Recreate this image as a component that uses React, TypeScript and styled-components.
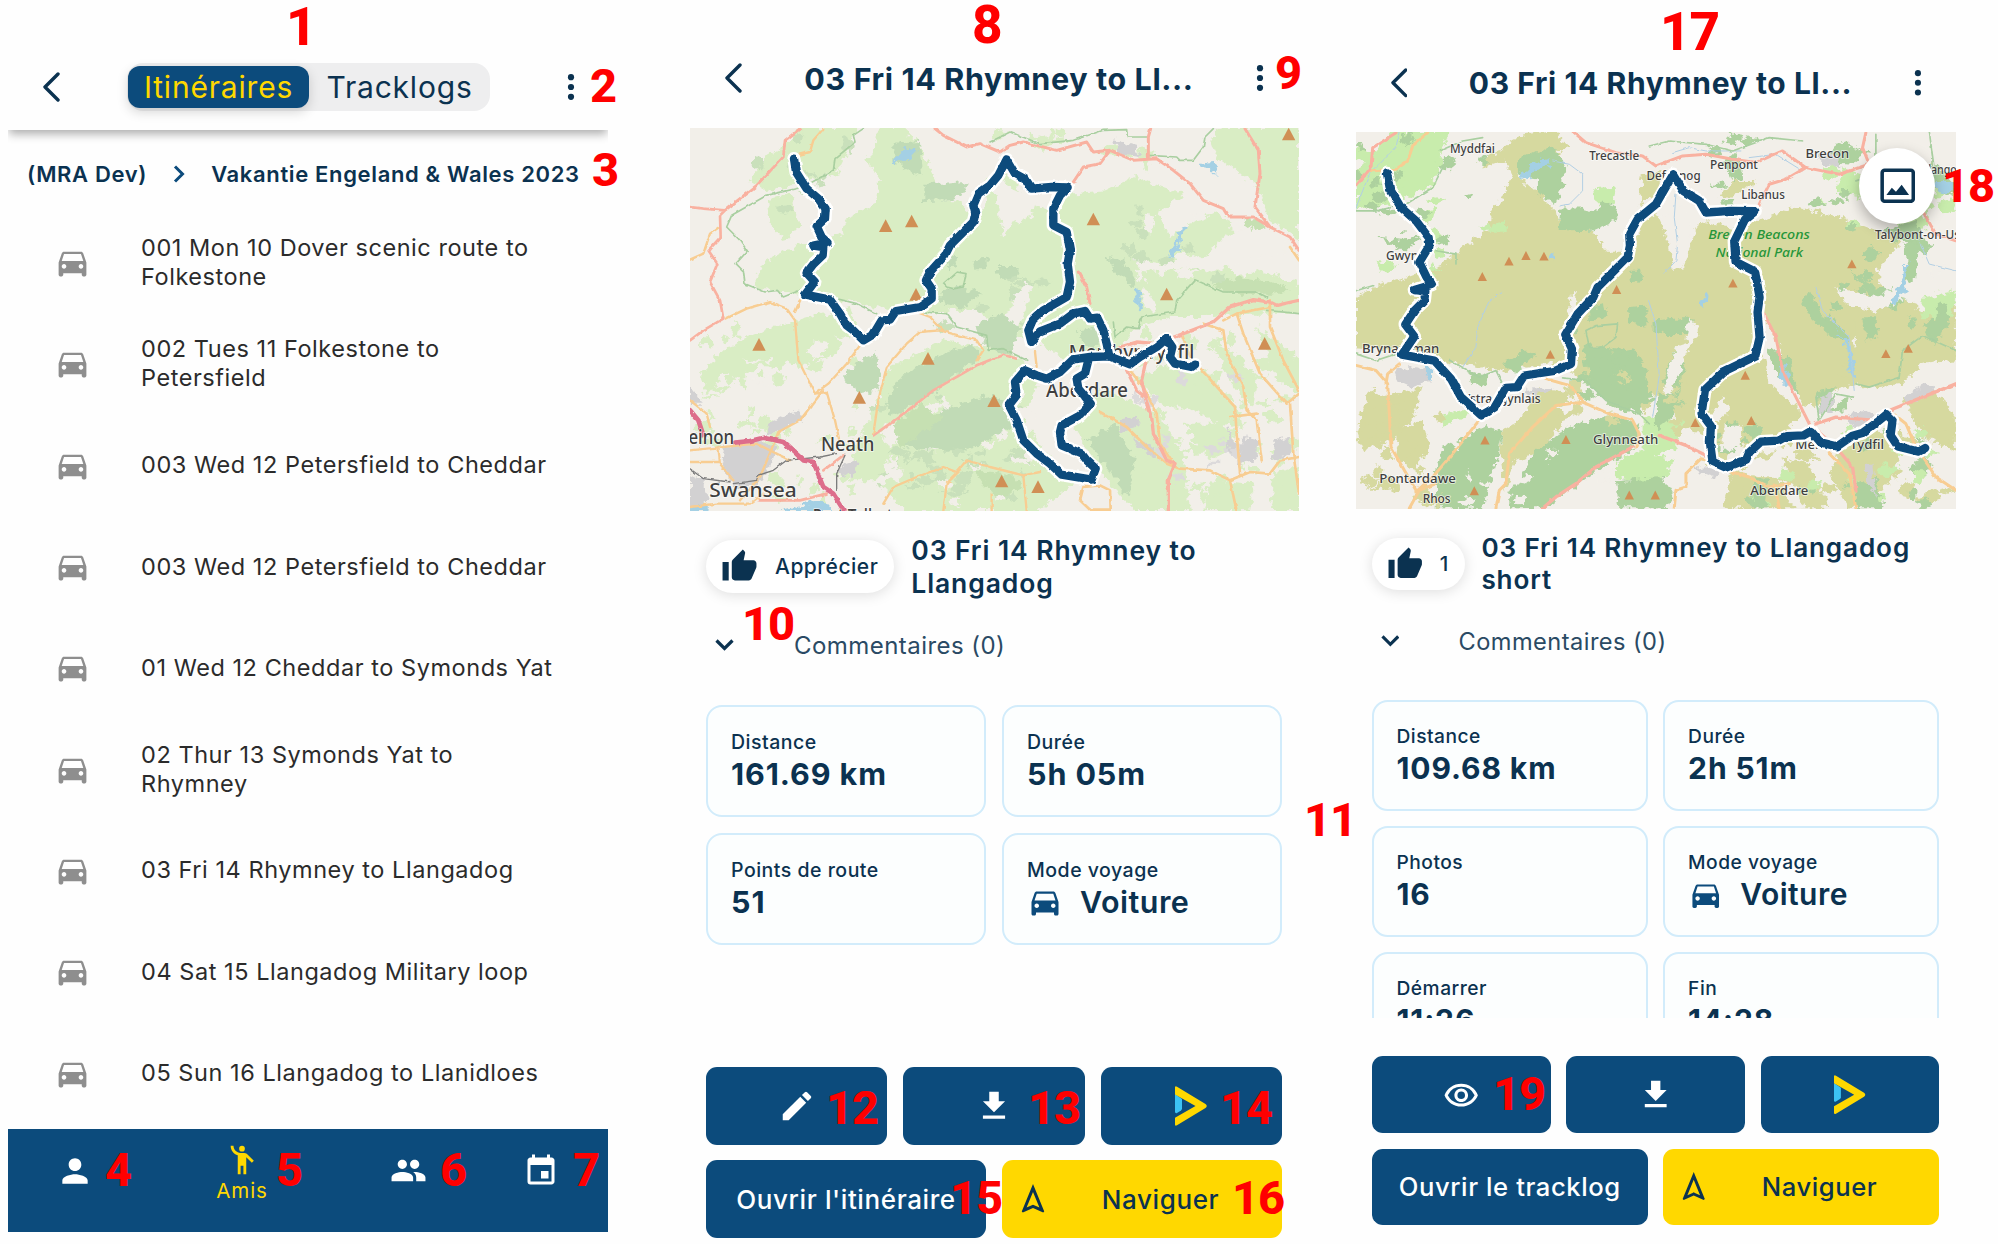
import React from 'react';
import styled, {createGlobalStyle} from 'styled-components';
import {
  MdDirectionsCar,
  MdEmojiPeople,
  MdEvent,
  MdFileDownload,
  MdModeEdit,
  MdOutlineNavigation,
  MdOutlineRemoveRedEye,
  MdPeople,
  MdPerson,
  MdThumbUp,
} from 'react-icons/md';

const NAVY = '#0c4b7c';
const INK = '#0b3250';
const YELLOW = '#ffd800';

const ROUTES = [
  '001 Mon 10 Dover scenic route to Folkestone',
  '002 Tues 11 Folkestone to Petersfield',
  '003 Wed 12 Petersfield to Cheddar',
  '003 Wed 12 Petersfield to Cheddar',
  '01 Wed 12 Cheddar to Symonds Yat',
  '02 Thur 13 Symonds Yat to Rhymney',
  '03 Fri 14 Rhymney to Llangadog',
  '04 Sat 15 Llangadog Military loop',
  '05 Sun 16 Llangadog to Llanidloes',
];

type Stat = {label: string; value: string; car?: boolean};

const ROUTE_STATS: Stat[] = [
  {label: 'Distance', value: '161.69 km'},
  {label: 'Durée', value: '5h 05m'},
  {label: 'Points de route', value: '51'},
  {label: 'Mode voyage', value: 'Voiture', car: true},
];

const TRACK_STATS: Stat[] = [
  {label: 'Distance', value: '109.68 km'},
  {label: 'Durée', value: '2h 51m'},
  {label: 'Photos', value: '16'},
  {label: 'Mode voyage', value: 'Voiture', car: true},
  {label: 'Démarrer', value: '11:26'},
  {label: 'Fin', value: '14:28'},
];

// callouts: text, left, baseline, big
const CALLOUTS: [string, number, number, boolean?][] = [
  ['1', 286, 46, true],
  ['2', 590, 102],
  ['3', 592, 186],
  ['4', 105, 1186],
  ['5', 276, 1186],
  ['6', 440, 1186],
  ['7', 573, 1186],
  ['8', 972, 44, true],
  ['9', 1275, 89],
  ['10', 742, 640],
  ['11', 1304, 836],
  ['12', 826, 1124],
  ['13', 1028, 1124],
  ['14', 1220, 1124],
  ['15', 950, 1214],
  ['16', 1232, 1214],
  ['17', 1660, 51, true],
  ['18', 1942, 202],
  ['19', 1493, 1110],
];

/* ---------- icons ---------- */

const BackIcon = () => (
  <svg width="18" height="30" viewBox="0 0 18 30" fill="none">
    <path d="M16 2 3 15l13 13" stroke={INK} strokeWidth="3.4" strokeLinecap="round" strokeLinejoin="round" />
  </svg>
);

const CrumbIcon = () => (
  <svg width="12" height="18" viewBox="0 0 12 18" fill="none">
    <path d="m2 1.5 7.5 7.5L2 16.5" stroke={NAVY} strokeWidth="3" />
  </svg>
);

const ExpandIcon = () => (
  <svg width="19" height="12" viewBox="0 0 19 12" fill="none">
    <path d="m1.5 1.5 8 8 8-8" stroke={INK} strokeWidth="3.2" />
  </svg>
);

const MoreIcon = () => (
  <svg width="8" height="28" viewBox="0 0 8 28" fill={INK}>
    <circle cx="4" cy="4.2" r="3.1" />
    <circle cx="4" cy="14" r="3.1" />
    <circle cx="4" cy="23.8" r="3.1" />
  </svg>
);

const PlayLogo = () => (
  <svg width="32" height="40" viewBox="0 0 32 40">
    <path d="M0 8 7 13v9.500q0 1.200-1 1.900L2 27q-2 .8-2-1.400Z" fill="#3cc3f5" />
    <path d="M0 1.200Q.3-.4 2 .7L30.500 18q2.500 2 0 4L2 39.300q-1.700 1-2-.6v-7L20.500 20 0 8.500Z" fill={YELLOW} />
  </svg>
);

const PhotoIcon = () => (
  <svg width="36" height="36" viewBox="0 0 36 36" fill="none">
    <rect x="2.200" y="2.200" width="31.600" height="31.600" rx="2.500" stroke={INK} strokeWidth="3.600" />
    <path d="m6.500 27.500 5.500-7.500 4.200 4 5.800-7 7.500 10.500Z" fill={INK} />
  </svg>
);

/* ---------- maps ---------- */

const ROAD = {a: '#f9b1a0', b: '#f8cd92', border: '#a9cfa0', m: '#dd6d8b', rail: '#7b7b7b', river: '#b2cfe4'};

type Road = [keyof typeof ROAD, number, string];
type Place = [string, number, number, number];

type MapData = {
  viewBox: string;
  patches: [string, string][];
  scatter: [string, number, number, number, number, number][];
  roads: Road[];
  peaks: [number, number][];
  peakSize: number;
  places: Place[];
  placeSize: number;
  park?: Place[];
  track: string;
};

// Deterministic little woods and fields, [colour, x, y, w, h, count]
const scatterPath = (x: number, y: number, w: number, h: number, count: number) => {
  let seed = x * 7 + y * 13 + w + 11;
  const next = () => {
    seed = (seed * 16807 + 12345) % 2147483647;
    return seed / 2147483647;
  };
  let d = '';
  for (let i = 0; i < count; i++) {
    const cx = x + next() * w;
    const cy = y + next() * h;
    const rx = 8 + next() * 26;
    const ry = 6 + next() * 20;
    const k = next() * 24 - 12;
    d += `M${cx - rx} ${cy + k}L${cx - k} ${cy - ry}L${cx + rx} ${cy - k}L${cx + k} ${cy + ry}Z`;
  }
  return d;
};

const ROUTE_MAP: MapData = {
  viewBox: '0 3 1827 1149',
  patches: [
    ['#d9edc4', 'M190 475 220 410 330 350 440 330 480 270 560 230 570 160 530 100 560 40 560 0 640 0 690 50 720 130 740 170 700 220 800 220 850 260 890 230 880 160 940 130 1010 210 1060 250 1140 200 1250 190 1330 150 1480 200 1400 260 1440 330 1560 250 1640 290 1600 400 1640 450 1720 430 1827 470 1827 560 1640 560 1540 570 1440 570 1340 600 1290 660 1150 720 1040 640 960 620 850 540 740 560 620 560 480 520 400 520 330 500 250 490Z'],
    ['#d9edc4', 'M180 160 230 90 280 60 330 0 500 0 480 60 440 140 330 170 230 190Z M1560 30 1600 0 1827 0 1827 340 1740 280 1700 180 1640 130 1580 90Z'],
    ['#d9edc4', 'M30 740 120 650 250 600 360 570 480 540 500 600 440 680 330 720 240 690 160 750 100 740 50 800Z M230 220 300 200 330 290 290 340 240 300Z'],
    ['#d9edc4', 'M560 820 600 720 760 640 900 660 1000 700 1050 760 1000 880 1080 1000 1150 1070 1050 1152 640 1152 560 1060 480 1060 500 950Z'],
    ['#d9edc4', 'M1330 760 1480 690 1560 740 1650 860 1600 900 1500 850 1420 830Z M1560 640 1640 680 1700 760 1690 840 1620 760Z M1700 600 1760 640 1827 700 1827 800 1760 760Z M1480 890 1600 890 1640 960 1560 1000Z M1220 780 1400 860 1480 980 1500 1152 1340 1152 1240 1050 1150 900Z M1560 1060 1690 1070 1680 1152 1540 1152Z M1750 1040 1827 1020 1827 1152 1740 1152Z'],
    ['#f2efe9', 'M900 150 1040 215 1020 270 960 290 940 330 925 250Z M1330 400 1440 410 1560 380 1600 330 1700 290 1790 310 1780 380 1680 390 1560 440 1500 420 1420 440 1350 430Z M940 580 1000 470 1025 480 985 620Z M1360 480 1400 540 1390 560 1350 500Z'],
    ['#c1dbb6', 'M460 740 560 670 570 790 520 800 460 760Z M590 820 640 740 760 680 850 650 870 690 780 760 700 820 600 870Z M610 50 690 45 700 150 650 130 610 100Z M700 170 770 170 820 165 830 190 780 220 700 222Z M750 500 800 470 870 500 820 540 760 530Z'],
    ['#c1dbb6', 'M1190 940 1280 890 1300 950 1340 1000 1310 1105 1250 1020Z M640 960 760 850 900 800 980 840 960 900 860 960 740 970Z M1250 390 1300 400 1340 460 1330 480 1280 440Z M1160 610 1240 600 1260 640 1190 660Z M850 600 930 560 990 600 960 690 880 650Z M850 400 890 395 890 430 860 430Z M770 390 800 390 800 420 775 425Z M920 420 990 420 985 445 925 455Z'],
    ['#c6e0b2', 'M1560 480 1640 450 1730 460 1800 490 1740 500 1640 500Z M600 900 690 830 760 870 640 960Z M850 1030 960 1040 1000 1080 920 1110Z M1650 280 1700 270 1730 300 1690 310Z'],
    ['#d2d1d2', 'M100 960 200 940 260 960 240 1020 200 1080 130 1080 90 1010Z M0 1040 40 1060 60 1120 0 1152Z M240 880 330 850 340 880 270 910 230 930Z M0 780 40 830 0 830Z M460 1010 500 1000 490 1050 450 1040Z M1270 40 1340 60 1350 90 1280 80Z M1290 880 1340 870 1350 895 1290 920Z M1660 930 1700 940 1700 1000 1640 1010Z M1750 940 1800 930 1810 980 1750 1000Z M1330 930 1400 960 1390 990 1340 960Z M1610 900 1640 960 1620 980Z'],
    ['#a4d0e4', 'M610 100 650 60 680 70 660 95 620 108Z M1530 110 1575 108 1583 145 1568 130 1532 126Z M1470 298 1484 300 1465 365 1445 390 1438 380 1460 350Z M1333 480 1345 478 1362 545 1348 550 1334 510Z M270 1152 340 1132 400 1118 430 1152Z M0 1140 40 1130 60 1152 0 1152Z'],
  ],
  scatter: [
    ['#c9e0bb', 560, 800, 460, 320, 44],
    ['#d9edc4', 20, 600, 480, 520, 44],
    ['#d9edc4', 1300, 620, 520, 520, 76],
    ['#f2efe9', 560, 780, 500, 360, 26],
    ['#f2efe9', 1350, 220, 300, 240, 12],
    ['#c9e0bb', 1280, 250, 440, 240, 10],
    ['#f2efe9', 60, 620, 420, 160, 12],
    ['#d9edc4', 900, 10, 500, 110, 14],
    ['#c9e0bb', 760, 450, 300, 190, 9],
    ['#dcdadb', 1300, 740, 500, 320, 14],
    ['#c9e0bb', 200, 20, 300, 250, 8],
  ],
  roads: [
    ['border', 5, 'M520 5 490 25 495 45 435 95 430 130 340 180 230 205 125 265 110 300 150 340 172 372 138 410 160 432 165 470 225 495 262 490 280 510 330 490 420 510 500 530 560 560 M700 555 770 560 800 600 890 625 895 670 940 665 1010 700 M760 470 800 435 828 440 820 480 790 485 770 480Z'],
    ['border', 5, 'M900 45 960 15 1050 50 1150 40 1240 10 1310 8 1312 30 1370 30 M1375 85 1460 90 1470 100 1510 100 1540 60 1545 30 1570 5 M1270 585 1275 630 1310 600 1345 605 1355 570 1455 555 1460 520 1515 458 1600 495 1700 495 1730 510 M1730 550 1827 560'],
    ['b', 7, 'M400 5 370 40 360 75 300 90 M88 300 60 320 40 380 0 398 M108 575 170 545 240 525 290 545 315 580 325 700 375 800 M335 510 315 555 M375 800 415 770 470 710 510 655 M375 800 410 795 435 880 450 950 M400 790 330 880 265 915 235 990 210 1050 150 1120 M0 820 50 860 60 900 M85 960 90 1010 130 1060 M0 970 200 950 300 1000 M0 1005 90 1005'],
    ['b', 7, 'M550 920 565 820 590 720 650 650 690 615 750 610 860 640 880 670 860 700 M680 555 720 570 760 610 M580 1130 610 1080 680 1050 760 1020 800 1035 830 1000 900 1020 1000 1045 1050 1035 M760 1152 770 1070 810 1030 M905 1152 905 1100 M1000 1045 1010 1152 M1035 675 1040 720 M0 1140 80 1130 180 1130 220 1100'],
    ['b', 8, 'M1230 855 1310 900 1370 960 1430 1010 1470 1025 1560 1030 1620 1060 1680 1035 1740 1040 1770 1000 1827 990 M1475 620 1500 690 1590 790 1635 840 1640 920 1650 1040 M1600 610 1610 680 1660 780 1670 850 1700 880 1715 1000 M1640 560 1660 620 1710 740 1790 830 1827 800 M1740 520 1740 600 1780 700 1827 790 M1320 730 1360 780 1400 860 1410 950 1450 1010 M1600 580 1640 560 1740 540 M1540 590 1600 610 M1620 1060 1640 1152 M1170 1120 1180 1080 1230 1075 1260 1090 1262 1148 1200 1148Z M1700 860 1620 870 M1800 830 1810 980 1827 1100 M1800 360 1827 400'],
    ['a', 8, 'M330 5 285 40 280 90 200 175 105 250 90 265 92 330 55 370 82 410 60 465 90 520 100 575 40 610 0 640 M0 240 40 245 105 250 M550 925 600 890 680 830 730 790 860 715 940 683 980 695 M400 1030 460 985 M210 1120 330 1120 410 1100'],
    ['a', 9, 'M735 5 760 25 830 60 870 50 930 75 960 55 1000 45 1100 70 1190 45 1210 75 1260 70 1330 100 1400 95 1450 130 1500 170 1540 220 1600 245 1615 270 1690 270 1740 300 1800 330 1827 370 M1375 90 1375 30 1382 5 M1260 70 1230 110 1180 120 1150 165 M1665 5 1705 70 1710 140 1695 240 1740 300 M1165 435 1190 480 1200 530'],
    ['a', 10, 'M1290 660 1340 645 1400 650 1480 620 1570 585 1620 540 1690 518 1740 525 1760 535 1827 520 M1310 730 1340 790 1365 810 1385 870 1390 920 1430 1000 1455 1010 1435 1060 1435 1152 M1370 690 1355 760 1375 850'],
    ['rail', 4, 'M0 1025 40 1055 120 1065 M130 1070 200 1060 205 1045 250 1030 290 1000 390 990 440 980 M465 985 440 1040 440 1090'],
    ['m', 14, 'M0 850 25 880 40 925 M135 947 180 942 220 932 280 945 340 1000 370 1005 400 1080 430 1100 460 1148'],
  ],
  peaks: [[587, 297], [665, 283], [678, 503], [207, 653], [714, 695], [508, 812], [912, 822], [935, 1063], [1210, 277], [1430, 502], [1724, 650], [1044, 1080], [1796, 22]],
  peakSize: 20,
  places: [
    ['Neath', 393, 972, 160],
    ['Swansea', 58, 1109, 262],
    ['Gorseinon', -118, 950, 250],
    ['Aberdare', 1068, 809, 246],
    ['Merthyr Tydfil', 1136, 695, 377],
    ['Port Talbot', 368, 1188, 240],
  ],
  placeSize: 57,
  track:
    'M312 95 318 135 350 185 385 215 407 245 405 275 380 298 395 330 413 347 370 356 400 360 398 385 370 412 350 438 374 464 345 503 420 518 450 560 470 595 490 610 520 640 550 622 575 580 600 578 618 552 690 540 725 515 725 485 708 460 720 435 765 385 780 355 850 285 856 260 850 235 865 200 900 175 925 145 950 97 975 140 1008 158 1025 185 1085 180 1133 181 1110 205 1090 245 1090 295 1130 315 1140 370 1133 410 1140 465 1130 510 1060 550 1028 580 1015 610 1024 645 1050 613 1110 590 1150 560 1185 552 1200 575 1222 572 1240 610 1250 650 1258 688 1200 690 1150 697 1110 735 1070 755 1040 745 1005 730 975 765 980 805 957 835 980 880 1000 940 1040 980 1080 1010 1115 1043 1205 1058 1217 1025 1190 1000 1175 980 1115 955 1110 915 1115 895 1170 865 1202 830 1165 785 1160 755 1185 740 1195 700 M1258 688 1320 712 1350 690 1400 660 1430 635 1447 660 1440 690 1455 710 1505 720 1515 713',
};

const TRACK_MAP: MapData = {
  viewBox: '0 3 1800 1134',
  patches: [
    ['#d6d99f', 'M0 500 60 470 150 440 260 400 330 340 400 300 410 240 450 180 470 130 440 90 380 110 370 90 430 60 500 10 600 0 640 50 600 70 500 90 480 130 560 200 600 240 610 300 710 300 750 360 830 360 860 280 900 240 935 320 950 415 980 410 1010 330 1030 270 1140 290 1210 270 1310 230 1460 260 1560 300 1640 330 1560 420 1600 500 1530 560 1490 640 1540 720 1500 760 1400 790 1380 830 1340 820 1300 720 1230 560 1210 620 1240 760 1340 850 1290 900 1180 950 1100 940 1060 860 970 910 940 800 700 760 600 700 440 720 300 700 130 660 0 650Z'],
    ['#d6d99f', 'M1500 560 1640 500 1700 540 1800 520 1800 690 1700 700 1640 760 1540 770 1440 740 1500 640Z M40 780 100 800 200 770 170 860 120 920 20 960 0 900Z M130 900 200 870 220 950 170 1020 120 980Z M550 770 640 790 620 830 500 860Z M440 900 560 820 640 850 560 960 470 1000 450 1080 430 960Z M860 130 920 120 900 200 850 220Z M1090 200 1130 150 1200 150 1130 200Z M1450 950 1560 900 1640 940 1600 1060 1480 1134 1420 1030Z M1130 1030 1260 1040 1320 1134 1100 1134Z M1640 800 1740 780 1800 860 1800 960 1700 920Z M1280 980 1360 1000 1420 1134 1340 1134Z'],
    ['#c8ecac', 'M0 120 60 60 110 0 280 0 260 60 250 120 200 180 100 220 0 240Z M715 175 780 170 770 220 720 220Z M190 240 240 230 230 270 200 280Z M370 290 450 270 450 300 390 300Z M780 990 860 960 950 990 930 1040 840 1050 780 1040Z M250 860 330 830 350 850 260 890Z M60 390 130 400 80 430Z M860 860 980 870 960 960 860 980Z M1460 110 1560 150 1520 200 1440 180Z M1600 240 1700 180 1740 230 1640 290Z M1700 500 1800 480 1790 560 1700 560Z'],
    ['#add19e', 'M480 90 540 60 590 50 630 100 620 160 600 220 540 190 540 140 480 130Z M610 230 680 230 720 240 740 215 790 230 780 270 710 300 605 302Z M820 420 860 420 855 450 825 455Z M810 530 870 525 875 585 820 580Z M700 530 750 520 755 560 700 575Z M680 640 780 660 830 650 860 700 890 800 850 850 760 830 700 760Z'],
    ['#add19e', 'M260 950 390 890 440 900 420 1000 380 1134 240 1134 240 1020Z M460 1090 540 960 640 890 760 850 850 880 840 950 740 1010 640 1080 560 1134 460 1134Z M440 700 500 660 540 670 480 730Z M780 1050 920 1040 950 1090 930 1134 790 1134Z M890 570 1010 560 1010 610 930 610 890 600Z M900 800 960 650 990 700 950 860 900 900Z M340 720 400 740 380 770 350 760Z M60 320 140 330 200 310 150 360Z'],
    ['#add19e', 'M1360 480 1400 560 1470 600 1480 640 1420 610 1370 570 1340 510Z M1480 420 1560 470 1640 480 1660 400 1640 340 1690 330 1670 480 1620 540 1560 510Z M1580 300 1680 270 1700 330 1640 330Z M1520 560 1560 560 1570 620 1530 630Z M1250 650 1300 690 1330 790 1270 740 1230 660Z M1380 780 1430 770 1430 830 1480 800 1470 840 1390 840Z M1700 590 1760 540 1790 560 1740 640Z M1200 1040 1240 1050 1230 1134 1190 1134Z M1440 30 1540 60 1490 100 1420 90Z M1730 90 1800 160 1790 200 1720 160Z M1500 1060 1560 1040 1580 1134 1500 1134Z'],
    ['#f2efe9', 'M920 260 980 220 1010 330 970 410 950 410 940 340Z M920 780 960 650 990 640 1000 560 1030 600 980 700 940 800Z M1060 860 1100 800 1120 840 1070 890Z M1440 470 1560 500 1640 460 1780 400 1720 450 1640 510 1560 540 1470 520Z M650 480 665 500 660 560 630 570Z M1100 880 1160 890 1150 950 1100 960Z'],
    ['#d2d1d2', 'M110 720 180 710 225 725 220 755 160 768 120 750Z M510 775 590 770 570 790 520 795Z M1010 1010 1050 1005 1100 1020 1060 1046Z M1380 60 1450 80 1460 110 1390 95Z M1390 800 1430 790 1430 850 1390 850Z M1480 850 1540 840 1570 880 1490 890Z M1640 800 1720 760 1740 780 1660 820Z M1530 1000 1550 1000 1560 1100 1530 1050Z'],
    ['#a4d0e4', 'M490 140 530 95 580 80 585 105 540 115 510 150Z M1050 488 1055 495 1045 530 1030 530 1035 505Z M210 715 228 715 228 745 210 740Z M580 365 588 362 595 385 585 390Z M1645 400 1664 400 1640 500 1620 520 1605 510 1630 470Z M1440 590 1455 610 1490 660 1498 740 1480 730 1470 650Z M1270 710 1290 710 1300 760 1280 760Z M1740 150 1800 150 1800 190 1745 180Z'],
  ],
  scatter: [
    ['#d6d99f', 0, 760, 260, 370, 30],
    ['#d6d99f', 600, 740, 500, 160, 24],
    ['#d6d99f', 1040, 900, 740, 220, 34],
    ['#f2efe9', 240, 900, 560, 220, 10],
    ['#c8ecac', 0, 60, 250, 400, 14],
    ['#add19e', 0, 20, 400, 320, 14],
    ['#c8ecac', 1380, 100, 410, 220, 16],
    ['#add19e', 1380, 180, 410, 420, 18],
    ['#add19e', 1050, 860, 740, 270, 22],
    ['#c8ecac', 1200, 860, 590, 270, 16],
    ['#add19e', 650, 560, 350, 270, 12],
    ['#add19e', 1050, 20, 400, 240, 9],
  ],
  roads: [
    ['river', 3, 'M0 230 40 130 120 50 130 0 M590 90 640 100 680 130 680 180 640 220 610 225 M440 485 400 510 365 590 360 650 320 710 M960 190 955 260 965 340 960 390 925 428 M878 510 900 580 910 740 890 860 M1155 60 1050 60 1000 50 950 65 M1380 470 1400 540 1480 620 1495 780 M1690 330 1720 400 1800 420 M1180 80 1260 70 1340 120'],
    ['border', 5, 'M250 60 320 30 380 20 M0 240 60 240 150 220 230 170 260 110 M0 480 50 465 M240 360 300 370 300 400 M690 600 720 585 785 580 780 620 740 650 700 650Z M0 670 60 690 120 670 M280 690 370 740 420 720 440 760 M620 742 690 750 750 810 850 850 880 880 M880 45 940 30 1050 40 1130 60 1240 20 1340 30 M1500 760 1540 770 1630 740 1640 660 1700 615 1800 660 M1380 800 1390 870 1440 790 1490 800 M1560 10 1560 130 1500 150 M1720 0 1740 150'],
    ['b', 9, 'M215 5 170 45 155 90 120 115 40 120 M0 705 60 720 95 760 100 850 105 950 145 1020 180 1080 M130 700 95 730 90 760 M180 1085 230 1040 290 970 365 875 M160 1134 190 1080 240 1060 M420 1134 430 1080 450 1060 460 970 530 890 600 825 680 815 760 850 830 870 850 910 840 950 M570 745 640 765 690 820 M955 1134 960 1080 990 1070 990 1030 1035 985 1060 990 M1110 1020 1180 1040 1240 1070 1300 1060 M1600 840 1650 880 1680 950 1740 1040 1800 1080 M1420 970 1480 1030 1500 1134 M1270 1134 1260 1080'],
    ['a', 9, 'M120 5 50 50 45 110 0 165 M655 5 690 35 780 65 860 75 900 105 980 75 1050 70 1130 85 1200 95 1280 60 1350 110 1450 130 1540 100 1600 100 M1350 110 1290 145 1240 160 1210 220 M1530 5 1520 50 1540 100 M1700 240 1740 310 1800 330 M1225 550 1260 620 1280 720 1320 800 1360 880 1370 900'],
    ['a', 10, 'M560 1134 600 1100 660 1060 720 1010 830 950 M910 915 990 945 1060 980 M1380 880 1440 860 1560 870 1600 840 1700 800 1800 760 M1440 950 1490 1010 1500 1080 M1370 890 1440 950'],
  ],
  peaks: [[379, 438], [459, 392], [510, 375], [564, 377], [782, 477], [1131, 458], [583, 672], [1168, 735], [387, 930], [630, 928], [355, 1082], [820, 1095], [898, 1095], [1018, 877], [1186, 871], [1488, 400], [1590, 670], [1657, 654]],
  peakSize: 14,
  places: [
    ['Myddfai', 282, 65, 135],
    ['Trecastle', 700, 88, 150],
    ['Defynnog', 872, 147, 162],
    ['Penpont', 1062, 115, 144],
    ['Brecon', 1349, 80, 131],
    ['Libanus', 1156, 205, 131],
    ['Gwynfe', 90, 388, 130],
    ['Brynamman', 18, 666, 232],
    ['Ystradgynlais', 322, 817, 232],
    ['Glynneath', 711, 942, 196],
    ['Pontardawe', 70, 1057, 230],
    ['Rhos', 200, 1119, 84],
    ['Merthyr Tydfil', 1318, 957, 267],
    ['Aberdare', 1183, 1093, 174],
    ['Talybont-on-Usk', 1557, 325, 275],
    ['Llangorse', 1700, 130, 150],
  ],
  placeSize: 40,
  park: [
    ['Brecon Beacons', 1057, 325, 305],
    ['National Park', 1079, 379, 262],
  ],
  track:
    'M93 127 102 175 135 230 180 270 218 320 220 345 190 395 212 440 228 462 175 478 208 482 205 510 175 540 148 582 175 618 138 672 235 690 285 745 315 800 376 855 415 832 450 772 482 770 505 735 600 720 645 700 648 655 628 612 665 550 712 500 725 470 815 380 822 345 820 310 845 265 900 220 952 130 982 180 1030 210 1050 245 1125 240 1198 241 1167 266 1135 332 1139 393 1198 423 1211 500 1205 545 1211 621 1198 677 1104 723 1047 778 1037 849 1065 887 1062 936 1070 994 1110 1012 1171 988 1180 966 1215 934 1268 931 1293 917 1343 915 1365 902 1394 936 1444 948 1488 917 1519 908 1564 875 1592 852 1610 870 1604 915 1626 948 1689 964 1708 953',
};

const RouteMap: React.FC<{data: MapData; id: string}> = ({data, id}) => {
  const label = (cls: string, [text, x, y, w]: Place) => (
    <text key={text} className={cls} x={x} y={y} textLength={w} lengthAdjust="spacingAndGlyphs" fontSize={data.placeSize}>
      {text}
    </text>
  );

  return (
    <MapSvg viewBox={data.viewBox} preserveAspectRatio="none">
      <defs>
        <filter id={`rough-${id}`} x="-5%" y="-5%" width="110%" height="110%">
          <feTurbulence type="fractalNoise" baseFrequency="0.045" numOctaves="3" seed="4" />
          <feDisplacementMap in="SourceGraphic" scale="34" xChannelSelector="R" yChannelSelector="G" />
        </filter>
        <filter id={`wobble-${id}`} x="-5%" y="-5%" width="110%" height="110%">
          <feTurbulence type="fractalNoise" baseFrequency="0.05" numOctaves="2" seed="9" />
          <feDisplacementMap in="SourceGraphic" scale="9" xChannelSelector="R" yChannelSelector="G" />
        </filter>
      </defs>
      <rect x="0" y="0" width="1830" height="1160" fill="#f2efe9" />
      <g filter={`url(#rough-${id})`}>
        {data.patches.slice(0, 5).map(([fill, d]) => (
          <path key={d} d={d} fill={fill} />
        ))}
        {data.scatter.map(([fill, x, y, w, h, n]) => (
          <path key={`${x}-${y}-${fill}`} d={scatterPath(x, y, w, h, n)} fill={fill} />
        ))}
        {data.patches.slice(5).map(([fill, d]) => (
          <path key={d} d={d} fill={fill} />
        ))}
      </g>
      <g filter={`url(#wobble-${id})`} fill="none" strokeLinejoin="round" strokeLinecap="round">
        {data.roads.map(([kind, width, d]) => (
          <path key={d} d={d} stroke={ROAD[kind]} strokeWidth={width} />
        ))}
      </g>
      {data.peaks.map(([x, y]) => (
        <path
          key={`${x}-${y}`}
          d={`M${x} ${y - data.peakSize}l${data.peakSize} ${data.peakSize * 1.9}h${-data.peakSize * 2}Z`}
          fill="#d08f55"
        />
      ))}
      {data.places.map(place => label('place', place))}
      {data.park?.map(place => label('park', place))}
      <g filter={`url(#wobble-${id})`} fill="none" strokeLinejoin="round" strokeLinecap="round">
        <path d={data.track} stroke="#fff" strokeWidth="40" />
        <path d={data.track} stroke={NAVY} strokeWidth="25" />
      </g>
    </MapSvg>
  );
};

/* ---------- screens ---------- */

const ListScreen = () => (
  <Phone $width={600} $left={8} $height={1232}>
    <ListHeader>
      <BackIcon />
      <Segmented>
        <Segment $active>Itinéraires</Segment>
        <Segment>Tracklogs</Segment>
      </Segmented>
      <MoreIcon />
    </ListHeader>
    <Breadcrumb>
      <Crumb>(MRA Dev)</Crumb>
      <CrumbIcon />
      <Crumb>Vakantie Engeland &amp; Wales 2023</Crumb>
    </Breadcrumb>
    <RouteList>
      {ROUTES.map((name, i) => (
        <RouteRow key={i}>
          <MdDirectionsCar size={37} color="#8e8e8e" />
          <RouteName>{name}</RouteName>
        </RouteRow>
      ))}
    </RouteList>
    <TabBar>
      <Tab $width={134}>
        <MdPerson size={38} />
      </Tab>
      <Tab $width={200} $active>
        <MdEmojiPeople size={34} />
        <TabLabel>Amis</TabLabel>
      </Tab>
      <Tab $width={132}>
        <MdPeople size={37} />
      </Tab>
      <Tab $width={134}>
        <MdEvent size={36} />
      </Tab>
    </TabBar>
  </Phone>
);

type DetailProps = {
  likes: string;
  name: string;
  stats: Stat[];
  openLabel: string;
  firstAction: React.ReactNode;
  map: React.ReactNode;
  left: number;
  top?: number;
  scale?: number;
  photos?: boolean;
};

const DetailScreen: React.FC<DetailProps> = props => (
  <Phone $width={609} $left={props.left} $top={props.top} $scale={props.scale} $height={1238}>
    <DetailHeader>
      <BackIcon />
      <ScreenTitle>03 Fri 14 Rhymney to Ll...</ScreenTitle>
      <MoreIcon />
    </DetailHeader>
    <MapBox>
      {props.map}
      {props.photos && (
        <PhotoButton>
          <PhotoIcon />
        </PhotoButton>
      )}
    </MapBox>
    <Details>
      <Summary>
        <LikeButton>
          <MdThumbUp size={37} />
          {props.likes}
        </LikeButton>
        <RouteTitle>{props.name}</RouteTitle>
      </Summary>
      <Comments>
        <ExpandIcon />
        <CommentsLabel>Commentaires (0)</CommentsLabel>
      </Comments>
      <StatGrid>
        {props.stats.map(({label, value, car}) => (
          <StatCard key={label}>
            <StatLabel>{label}</StatLabel>
            <StatValue $medium={car}>
              {car && <MdDirectionsCar size={36} color={NAVY} />}
              {value}
            </StatValue>
          </StatCard>
        ))}
      </StatGrid>
    </Details>
    <Actions>
      <ActionRow>
        <ActionButton>{props.firstAction}</ActionButton>
        <ActionButton>
          <MdFileDownload size={38} />
        </ActionButton>
        <ActionButton>
          <PlayLogo />
        </ActionButton>
      </ActionRow>
      <ActionRow>
        <ActionButton>{props.openLabel}</ActionButton>
        <NavigateButton>
          <MdOutlineNavigation size={36} />
          <NavigateLabel>Naviguer</NavigateLabel>
        </NavigateButton>
      </ActionRow>
    </Actions>
  </Phone>
);

const App: React.FC = () => (
  <Page>
    <GlobalStyle />
    <ListScreen />
    <DetailScreen
      left={82}
      likes="Apprécier"
      name="03 Fri 14 Rhymney to Llangadog"
      stats={ROUTE_STATS}
      openLabel="Ouvrir l'itinéraire"
      firstAction={<MdModeEdit size={38} />}
      map={<RouteMap id="route" data={ROUTE_MAP} />}
    />
    <DetailScreen
      left={58}
      top={6}
      scale={0.985}
      photos
      likes="1"
      name="03 Fri 14 Rhymney to Llangadog short"
      stats={TRACK_STATS}
      openLabel="Ouvrir le tracklog"
      firstAction={<MdOutlineRemoveRedEye size={37} />}
      map={<RouteMap id="track" data={TRACK_MAP} />}
    />
    {CALLOUTS.map(([text, left, baseline, big]) => (
      <Callout key={text} $left={left} $baseline={baseline} $size={big ? 53 : 47}>
        {text}
      </Callout>
    ))}
  </Page>
);

export default App;

const GlobalStyle = createGlobalStyle`
  * {
    box-sizing: border-box;
  }
  body {
    margin: 0;
    background: #fefefe;
    color: ${INK};
    font-family: Inter, 'Liberation Sans', sans-serif;
  }
  svg {
    flex-shrink: 0;
    display: block;
  }
`;

const Page = styled.div`
  position: relative;
  display: flex;
  align-items: flex-start;
  width: 1998px;
  height: 1244px;
  overflow: hidden;
`;

const Phone = styled.section<{$width: number; $left: number; $height: number; $top?: number; $scale?: number}>`
  display: flex;
  flex-direction: column;
  flex-shrink: 0;
  width: ${p => p.$width}px;
  height: ${p => p.$height}px;
  margin: ${p => p.$top ?? 0}px 0 0 ${p => p.$left}px;
  zoom: ${p => p.$scale ?? 1};
`;

const ListHeader = styled.header`
  display: flex;
  align-items: center;
  justify-content: space-between;
  height: 130px;
  padding: 44px 33px 0 34px;
  box-shadow: 0 5px 9px -1px rgba(0, 0, 0, 0.32);
  clip-path: inset(0 0 -20px 0);
`;

const Segmented = styled.div`
  display: flex;
  width: 363px;
  height: 48px;
  margin-left: 2px;
  margin-right: 12px;
  padding: 3px 0 3px 1px;
  border-radius: 16px;
  background: #eeeeef;
`;

const Segment = styled.div<{$active?: boolean}>`
  display: flex;
  flex: 1;
  align-items: center;
  justify-content: center;
  border-radius: 12px;
  font-size: 30px;
  letter-spacing: 0.8px;
  background: ${p => (p.$active ? NAVY : 'transparent')};
  color: ${p => (p.$active ? YELLOW : INK)};
  box-shadow: ${p => (p.$active ? '0 4px 12px rgba(0, 0, 0, 0.16)' : 'none')};
`;

const Breadcrumb = styled.nav`
  display: flex;
  align-items: center;
  gap: 26px;
  height: 82px;
  padding: 5px 0 0 19px;
`;

const Crumb = styled.span`
  font-size: 22px;
  font-weight: 600;
  letter-spacing: 0.65px;
  white-space: nowrap;
`;

const RouteList = styled.ul`
  flex: 1;
  margin: 0;
  padding: 0;
  list-style: none;
`;

const RouteRow = styled.li`
  display: flex;
  align-items: center;
  height: 101.3px;
  padding-left: 46px;
`;

const RouteName = styled.span`
  width: 422px;
  margin: -1px 0 0 50px;
  color: #2b2b2b;
  font-size: 23.5px;
  line-height: 29px;
  letter-spacing: 0.55px;
`;

const TabBar = styled.nav`
  display: flex;
  height: 103px;
  padding-bottom: 20px;
  background: ${NAVY};
`;

const Tab = styled.div<{$width: number; $active?: boolean}>`
  display: flex;
  flex-direction: column;
  align-items: center;
  justify-content: center;
  width: ${p => p.$width}px;
  padding-top: ${p => (p.$active ? 6 : 0)}px;
  color: ${p => (p.$active ? YELLOW : '#fff')};
`;

const TabLabel = styled.span`
  font-size: 20.5px;
  line-height: 28px;
  letter-spacing: 0.9px;
`;

const DetailHeader = styled.header`
  display: flex;
  flex-shrink: 0;
  align-items: center;
  justify-content: space-between;
  height: 128px;
  padding: 28px 35px 0 34px;
`;

const ScreenTitle = styled.h1`
  margin: 0;
  font-size: 30.5px;
  font-weight: 700;
  letter-spacing: 0.6px;
  white-space: nowrap;
`;

const MapBox = styled.div`
  position: relative;
  flex-shrink: 0;
  height: 383px;
`;

const MapSvg = styled.svg`
  width: 100%;
  height: 100%;
  overflow: hidden;
  font-family: 'Noto Sans', 'Open Sans', sans-serif;

  .place {
    fill: #3f3f3f;
    font-weight: 500;
    stroke: rgba(255, 255, 255, 0.7);
    stroke-width: 5px;
    paint-order: stroke;
  }

  .park {
    fill: #27963a;
    font-weight: 500;
    font-style: italic;
  }
`;

const PhotoButton = styled.button`
  position: absolute;
  top: 16px;
  right: 21px;
  display: flex;
  align-items: center;
  justify-content: center;
  width: 77px;
  height: 77px;
  padding: 0;
  border: 0;
  border-radius: 50%;
  background: #fff;
  box-shadow: 0 6px 14px rgba(0, 0, 0, 0.28);
`;

const Details = styled.div`
  flex: 1;
  min-height: 0;
  padding: 23px 17px 0 16px;
  overflow: hidden;
`;

const Summary = styled.div`
  display: flex;
  align-items: center;
  gap: 17px;
  height: 65px;
`;

const LikeButton = styled.button`
  display: flex;
  flex-shrink: 0;
  align-items: center;
  gap: 17px;
  height: 53px;
  padding: 0 16px 0 15px;
  border: 0;
  border-radius: 27px;
  background: #fff;
  color: ${INK};
  box-shadow: 0 2px 14px rgba(0, 0, 0, 0.13);
  font: 500 21px Inter, sans-serif;
  letter-spacing: 0.5px;
`;

const RouteTitle = styled.h2`
  margin: 0;
  font-size: 26.5px;
  font-weight: 600;
  line-height: 32.5px;
  letter-spacing: 0.9px;
`;

const Comments = styled.div`
  display: flex;
  align-items: center;
  gap: 60px;
  height: 92px;
  padding-left: 9px;
`;

const CommentsLabel = styled.span`
  color: #2a4a64;
  font-size: 24px;
  letter-spacing: 0.45px;
`;

const StatGrid = styled.div`
  display: grid;
  grid-template-columns: 1fr 1fr;
  grid-auto-rows: 112px;
  gap: 16px;
  margin-top: 14px;
`;

const StatCard = styled.div`
  display: flex;
  flex-direction: column;
  padding: 22px 0 0 23px;
  border: 2.1px solid #d2ecfb;
  border-radius: 16px;
  background: #fcfefe;
`;

const StatLabel = styled.span`
  font-size: 19.5px;
  font-weight: 500;
  line-height: 26px;
  letter-spacing: 0.5px;
`;

const StatValue = styled.span<{$medium?: boolean}>`
  display: flex;
  align-items: center;
  gap: 17px;
  font-size: 30.5px;
  font-weight: ${p => (p.$medium ? 600 : 700)};
  line-height: 38px;
  letter-spacing: ${p => (p.$medium ? 0.5 : 0.9)}px;
`;

const Actions = styled.footer`
  display: flex;
  flex-direction: column;
  gap: 15.5px;
  padding: 39px 17px 0 16px;
`;

const ActionRow = styled.div`
  display: flex;
  gap: 16px;
`;

const ActionButton = styled.button`
  display: flex;
  flex: 1 1 0;
  align-items: center;
  justify-content: center;
  min-width: 0;
  height: 78px;
  padding: 0;
  border: 0;
  border-radius: 11px;
  background: ${NAVY};
  color: #fff;
  font: 500 26px Inter, sans-serif;
  letter-spacing: 0.6px;
  white-space: nowrap;
`;

const NavigateButton = styled(ActionButton)`
  justify-content: flex-start;
  background: ${YELLOW};
  color: ${INK};

  svg {
    margin-left: 13px;
  }
`;

const NavigateLabel = styled.span`
  flex: 1;
  padding-right: 12px;
  text-align: center;
`;

// Numbered marks lie over the three screens
const Callout = styled.span<{$left: number; $baseline: number; $size: number}>`
  position: absolute;
  left: ${p => p.$left}px;
  top: ${p => p.$baseline - p.$size * 0.8415}px;
  color: #ff0000;
  font: 800 ${p => p.$size}px/1 Roboto, Arial, sans-serif;
  letter-spacing: -1px;
`;
